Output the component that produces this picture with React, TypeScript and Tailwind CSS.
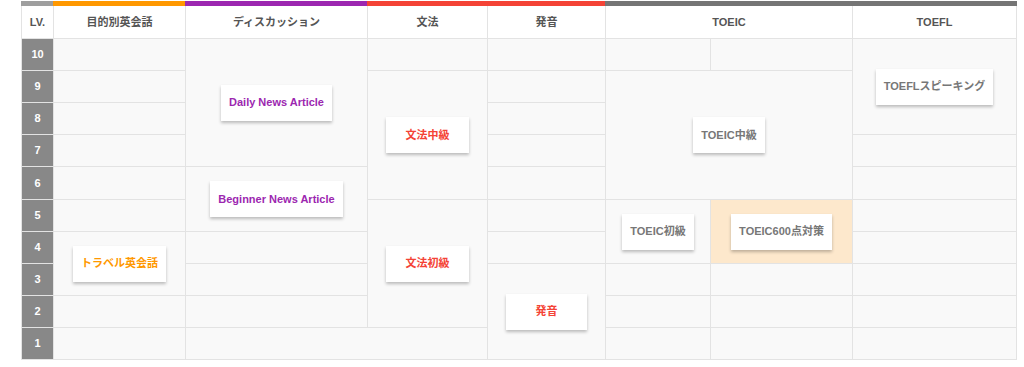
const font = "font-['Liberation_Sans','Noto_Sans_CJK_JP',sans-serif]"

function Cell({ className = '', children }: { className?: string; children?: React.ReactNode }) {
	return <div className={`flex items-center justify-center bg-[#f9f9f9] ${className}`}>{children}</div>
}

function Card({ color, children }: { color: string; children: React.ReactNode }) {
	return (
		<div
			className={`flex h-9 items-center justify-center bg-white px-2 text-[11px] font-bold shadow-[0_2px_3px_rgba(0,0,0,0.25)] ${color}`}
		>
			{children}
		</div>
	)
}

function Head({ className = '', children }: { className?: string; children: React.ReactNode }) {
	return (
		<div className={`flex items-center justify-center bg-white text-[11px] font-bold text-[#555] ${className}`}>
			{children}
		</div>
	)
}

function Lv({ className, n }: { className: string; n: number }) {
	return (
		<div className={`col-start-1 flex items-center justify-center bg-[#888] text-[11px] font-bold text-white ${className}`}>
			{n}
		</div>
	)
}

export default function App() {
	return (
		<div className={`min-h-[367px] bg-white pl-[21px] pt-px ${font}`}>
			<div className="w-[996px]">
				<div className="flex h-[5px]">
					<div className="w-[32px] bg-[#9e9e9e]" />
					<div className="w-[132px] bg-[#ff9800]" />
					<div className="w-[182px] bg-[#9c27b0]" />
					<div className="w-[238px] bg-[#f44336]" />
					<div className="w-[247px] bg-[#757575]" />
					<div className="w-[165px] bg-[#757575]" />
				</div>
				<div className="grid grid-cols-[31px_131px_181px_119px_117px_104px_141px_163px] grid-rows-[32px_repeat(4,31px)_32px_repeat(5,31px)] gap-px bg-[#e3e3e3] px-px pb-px">
					{/* header */}
					<Head className="col-start-1 row-start-1">LV.</Head>
					<Head className="col-start-2 row-start-1">目的別英会話</Head>
					<Head className="col-start-3 row-start-1">ディスカッション</Head>
					<Head className="col-start-4 row-start-1">文法</Head>
					<Head className="col-start-5 row-start-1">発音</Head>
					<Head className="col-start-6 col-span-2 row-start-1">TOEIC</Head>
					<Head className="col-start-8 row-start-1">TOEFL</Head>

					{/* levels */}
					<Lv className="row-start-2" n={10} />
					<Lv className="row-start-3" n={9} />
					<Lv className="row-start-4" n={8} />
					<Lv className="row-start-5" n={7} />
					<Lv className="row-start-6" n={6} />
					<Lv className="row-start-7" n={5} />
					<Lv className="row-start-8" n={4} />
					<Lv className="row-start-9" n={3} />
					<Lv className="row-start-10" n={2} />
					<Lv className="row-start-11" n={1} />

					{/* 目的別英会話 */}
					<Cell className="col-start-2 row-start-2" />
					<Cell className="col-start-2 row-start-3" />
					<Cell className="col-start-2 row-start-4" />
					<Cell className="col-start-2 row-start-5" />
					<Cell className="col-start-2 row-start-6" />
					<Cell className="col-start-2 row-start-7" />
					<Cell className="col-start-2 row-start-8 row-span-2">
						<Card color="text-[#ff9800]">トラベル英会話</Card>
					</Cell>
					<Cell className="col-start-2 row-start-10" />
					<Cell className="col-start-2 row-start-11" />

					{/* ディスカッション */}
					<Cell className="col-start-3 row-start-2 row-span-4">
						<Card color="text-[#9c27b0]">Daily News Article</Card>
					</Cell>
					<Cell className="col-start-3 row-start-6 row-span-2">
						<Card color="text-[#9c27b0]">Beginner News Article</Card>
					</Cell>
					<Cell className="col-start-3 row-start-8" />
					<Cell className="col-start-3 row-start-9" />
					<Cell className="col-start-3 row-start-10" />
					<Cell className="col-start-3 col-span-2 row-start-11" />

					{/* 文法 */}
					<Cell className="col-start-4 row-start-2" />
					<Cell className="col-start-4 row-start-3 row-span-4">
						<Card color="w-[83px] text-[#f44336]">文法中級</Card>
					</Cell>
					<Cell className="col-start-4 row-start-7 row-span-4">
						<Card color="w-[83px] text-[#f44336]">文法初級</Card>
					</Cell>

					{/* 発音 */}
					<Cell className="col-start-5 row-start-2" />
					<Cell className="col-start-5 row-start-3" />
					<Cell className="col-start-5 row-start-4" />
					<Cell className="col-start-5 row-start-5" />
					<Cell className="col-start-5 row-start-6" />
					<Cell className="col-start-5 row-start-7" />
					<Cell className="col-start-5 row-start-8" />
					<Cell className="col-start-5 row-start-9 row-span-3">
						<Card color="w-[81px] text-[#f44336]">発音</Card>
					</Cell>

					{/* TOEIC */}
					<Cell className="col-start-6 row-start-2" />
					<Cell className="col-start-7 row-start-2" />
					<Cell className="col-start-6 col-span-2 row-start-3 row-span-4">
						<Card color="text-[#777]">TOEIC中級</Card>
					</Cell>
					<Cell className="col-start-6 row-start-7 row-span-2">
						<Card color="text-[#777]">TOEIC初級</Card>
					</Cell>
					<Cell className="col-start-7 row-start-7 row-span-2 !bg-[#fde8cc]">
						<Card color="text-[#777]">TOEIC600点対策</Card>
					</Cell>
					<Cell className="col-start-6 row-start-9" />
					<Cell className="col-start-7 row-start-9" />
					<Cell className="col-start-6 row-start-10" />
					<Cell className="col-start-7 row-start-10" />
					<Cell className="col-start-6 row-start-11" />
					<Cell className="col-start-7 row-start-11" />

					{/* TOEFL */}
					<Cell className="col-start-8 row-start-2 row-span-3">
						<Card color="text-[#777]">TOEFLスピーキング</Card>
					</Cell>
					<Cell className="col-start-8 row-start-5" />
					<Cell className="col-start-8 row-start-6" />
					<Cell className="col-start-8 row-start-7" />
					<Cell className="col-start-8 row-start-8" />
					<Cell className="col-start-8 row-start-9" />
					<Cell className="col-start-8 row-start-10" />
					<Cell className="col-start-8 row-start-11" />
				</div>
			</div>
		</div>
	)
}
